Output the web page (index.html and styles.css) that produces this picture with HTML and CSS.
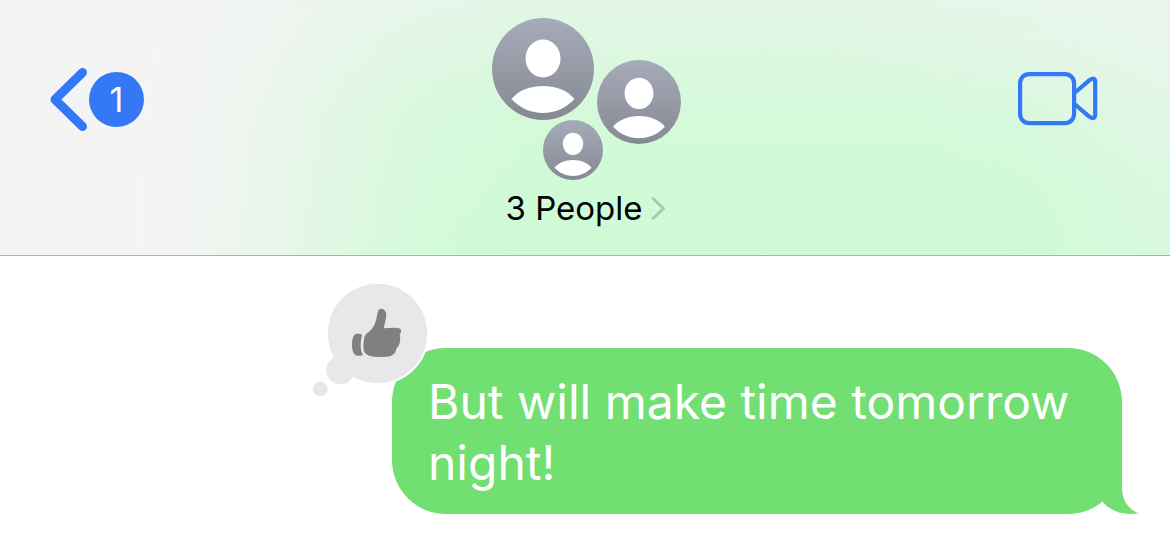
FILE: index.html
```html
<!DOCTYPE html>
<html lang="en">
<head>
<meta charset="utf-8">
<meta name="viewport" content="width=device-width, initial-scale=1">
<title>Messages</title>
<link rel="stylesheet" href="styles.css">
</head>
<body>
<header class="navbar">
  <button class="back" type="button" aria-label="Back, 1 unread">
    <svg class="back-icon" width="38" height="63" viewBox="0 0 38 63" aria-hidden="true"><path d="M32.500 4.500 5 31.500 32.500 58.500" fill="none" stroke="#3478f6" stroke-width="9" stroke-linecap="round" stroke-linejoin="round"/></svg>
    <span class="badge">1</span>
  </button>
  <button class="group" type="button">
    <svg class="avatars" width="189" height="162" viewBox="0 0 189 162" aria-hidden="true">
      <defs>
        <linearGradient id="shade" x1="0" y1="0" x2="0" y2="1"><stop offset="0" stop-color="#a6abb9"/><stop offset="1" stop-color="#858992"/></linearGradient>
        <symbol id="person" viewBox="0 0 102 102">
          <circle cx="51" cy="51" r="51" fill="url(#shade)"/>
          <ellipse cx="51" cy="40.500" rx="17.500" ry="19" fill="#fff"/>
          <path d="M19.500 81C26 73 37 68 51 68s25 5 31.500 13C74 90 63 95 51 95S28 90 19.500 81Z" fill="#fff"/>
        </symbol>
      </defs>
      <use href="#person" x="0" y="0" width="102" height="102"/>
      <use href="#person" x="105" y="42" width="84" height="84"/>
      <use href="#person" x="51" y="102" width="60" height="60"/>
    </svg>
    <span class="title">3 People
      <svg width="16" height="24" viewBox="0 0 16 24" aria-hidden="true"><path d="M2 2.500 12.500 12.500 2 22.500" fill="none" stroke="#a5c9ab" stroke-width="2.800" stroke-linecap="round" stroke-linejoin="round"/></svg>
    </span>
  </button>
  <button class="video" type="button" aria-label="Video call">
    <svg width="80" height="54" viewBox="0 0 80 54" aria-hidden="true"><g fill="none" stroke="#3478f6" stroke-width="4.200" stroke-linejoin="round"><rect x="2.100" y="2.100" width="54" height="49" rx="9"/><path d="M56.500 21 71.500 8.200Q77.200 4.500 77.200 10V42Q77.200 48.500 71.500 44.800L56.500 32"/></g></svg>
  </button>
</header>
<main class="thread">
  <div class="bubble">
    <p class="text">But will make time tomorrow night!</p>
    <svg class="tail" width="40" height="60" viewBox="0 0 40 60" aria-hidden="true"><path d="M2.700 48C9 55.500 19 60 30 60Q34 60 39 59.600C28 55 22 46 22 33V0H2.700Z" fill="#72df72"/></svg>
    <svg class="reaction" width="118" height="116" viewBox="36 36 354 348" role="img" aria-label="Liked">
      <circle cx="232.500" cy="190" r="155" fill="#fff"/>
      <g fill="#e8e8ea"><circle cx="232.500" cy="190" r="149"/><circle cx="121" cy="301" r="42"/><circle cx="61" cy="357" r="22.500"/></g>
      <g fill="#808080">
        <path d="M186 194C184 207 182 214 182 226C182 239 184 247 189 255C186 257 179 258 171 257C160 254 156 240 156 224C156 208 160 194 168 192C174 191 181 191 186 194Z"/>
        <path d="M192 207C193 197 199 190 207 185C219 176 225 164 229 147C231 137 232 129 235 122C238 116 246 115 252 119C258 123 260 131 258 142C257 153 253 165 251 175C266 175 280 172 294 174C301 175 304 179 303 185C302 190 300 191 299 194C301 199 301 205 300 212C299 222 296 229 290 235C287 247 282 255 272 258C260 262 223 262 207 257C196 253 191 246 190 235C190 225 191 216 192 207Z"/>
      </g>
    </svg>
  </div>
</main>
</body>
</html>
```
FILE: styles.css
```css
* {
  box-sizing: border-box;
}

body {
  margin: 0;
  background: #fff;
  color: #000;
  font-family: Inter, "Liberation Sans", sans-serif;
}

button {
  margin: 0;
  padding: 0;
  border: 0;
  background: none;
  color: inherit;
  font: inherit;
  cursor: pointer;
}

svg {
  display: block;
}

.navbar {
  display: grid;
  grid-template-columns: 1fr auto 1fr;
  align-items: start;
  padding: 18px 48px 27px 50px;
  border-bottom: 1px solid #adb2ae;
  background:
    linear-gradient(90deg, #f4f4f4 10%, rgba(244, 244, 244, 0.94) 16%, rgba(244, 244, 244, 0.72) 23%, rgba(244, 244, 244, 0.4) 30%, rgba(244, 244, 244, 0.14) 37%, rgba(244, 244, 244, 0) 45%),
    radial-gradient(ellipse 30% 80% at 100% 0%, rgba(238, 245, 242, 0.45), rgba(238, 245, 242, 0)),
    linear-gradient(270deg, rgba(240, 244, 241, 0.35), rgba(240, 244, 241, 0) 14%),
    linear-gradient(180deg, rgba(238, 243, 240, 0.7), rgba(238, 243, 238, 0.2) 45%, rgba(238, 243, 238, 0)),
    #cdfbd4;
}

.back {
  display: flex;
  align-items: center;
  justify-self: start;
  gap: 1px;
  margin-top: 50px;
}

.badge {
  width: 55px;
  height: 55px;
  border-radius: 50%;
  background: #3478f6;
  color: #fff;
  font-size: 34px;
  line-height: 55px;
  text-align: center;
}

.group {
  display: flex;
  flex-direction: column;
  align-items: center;
  gap: 8px;
}

.title {
  display: flex;
  align-items: center;
  gap: 8px;
  font-size: 33px;
  line-height: 40px;
}

.video {
  justify-self: end;
  margin: 54px 24px 0 0;
}

.thread {
  display: flex;
  justify-content: flex-end;
  padding: 92px 48px 37px;
}

.bubble {
  position: relative;
  max-width: 730px;
  padding: 23px 36px 21px;
  border-radius: 54px;
  background: #72df72;
  color: #fff;
}

.text {
  margin: 0;
  font-size: 48px;
  line-height: 61px;
}

.tail {
  position: absolute;
  right: -18px;
  bottom: 0;
}

.reaction {
  position: absolute;
  top: -66px;
  left: -80px;
}
```
